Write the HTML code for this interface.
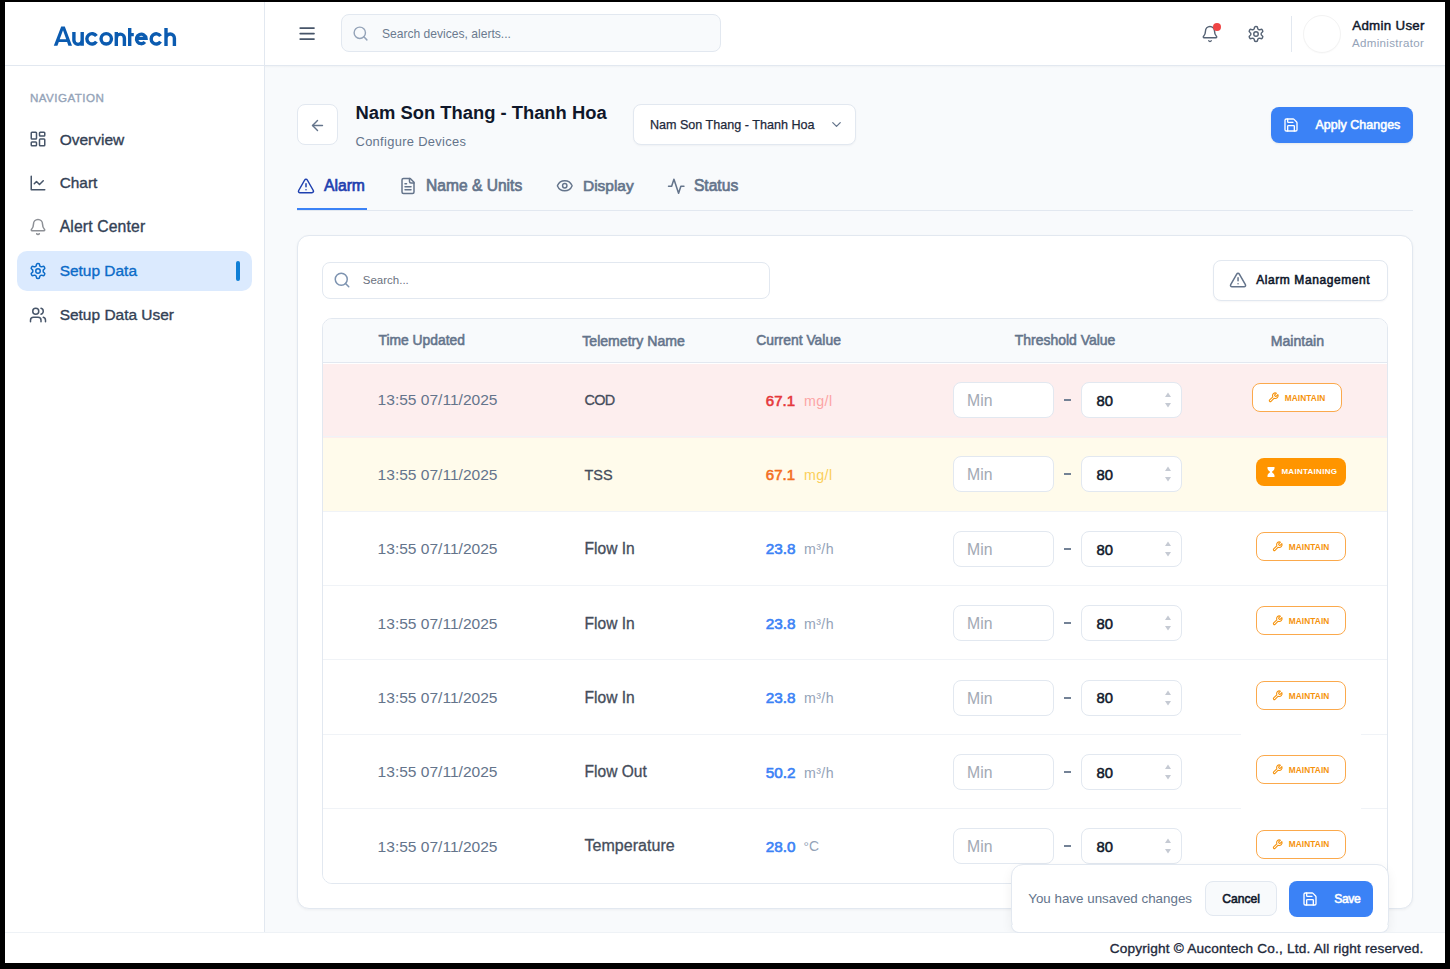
<!DOCTYPE html>
<html><head><meta charset="utf-8"><title>Aucontech - Setup Data</title>
<style>
*{box-sizing:border-box;margin:0;padding:0}
html,body{width:1450px;height:969px;overflow:hidden;background:#000;font-family:"Liberation Sans",sans-serif}
.b{position:absolute}
.t{position:absolute;white-space:nowrap;line-height:1}
svg{position:absolute;overflow:visible}
</style></head>
<body>
<div class="b" style="left:5px;top:2px;width:1440px;height:961px;background:#f8fafc"></div>
<div class="b" style="left:5px;top:2px;width:259px;height:930px;background:#fff"></div>
<div class="b" style="left:264px;top:2px;width:1px;height:930px;background:#e2e8f0"></div>
<div class="b" style="left:265px;top:2px;width:1180px;height:63px;background:#fff"></div>
<div class="b" style="left:5px;top:65px;width:1440px;height:1px;background:#e2e8f0"></div>
<div class="b" style="left:265px;top:66px;width:1180px;height:2px;background:linear-gradient(rgba(15,23,42,0.035),rgba(15,23,42,0))"></div>
<svg style="left:0;top:0" width="200" height="64" viewBox="0 0 200 64"><path fill="#0b5bb0" fill-rule="evenodd" d="M53.8 45.8 L61.2 26.5 L64.8 26.5 L72 45.8 L68.4 45.8 L67.1 42.1 L58.8 42.1 L57.4 45.8 Z M63 30.3 L66.2 39.3 L59.7 39.3 Z"/><g fill="none" stroke="#0b5bb0" stroke-width="3.4"><path d="M73.9 31.9 V40.2 A4.15 4.15 0 0 0 82.2 40.2 V31.9 M82.2 38 V45.8"/><path d="M96.41 36.02 A5.20 5.20 0 1 0 96.41 41.68"/><circle cx="106.25" cy="38.85" r="5.2"/><path d="M116.3 45.9 V32.1 M116.3 38.2 A4.05 4.05 0 0 1 124.4 38.2 V45.9"/><path d="M129.7 28.1 V45.9 M128 34.6 H133.8"/><path d="M136.4 38.4 H146 A4.75 4.75 0 1 0 144.9 42"/><path d="M160.53 36.12 A5.10 5.10 0 1 0 160.53 41.68"/><path d="M166 28.1 V45.9 M166 38.2 A4.2 4.2 0 0 1 174.4 38.2 V45.9"/></g></svg>
<svg style="left:0;top:0" width="1450" height="80"><path d="M300.2 28.1h13.8M300.2 33.6h13.8M300.2 39.1h13.8" stroke="#475569" stroke-width="1.7" stroke-linecap="round"/></svg>
<div class="b" style="left:341px;top:14px;width:380px;height:38px;background:#f8fafc;border:1px solid #e2e8f0;border-radius:8px"></div>
<svg style="left:352px;top:25px" width="17" height="17" viewBox="0 0 24 24" fill="none" stroke="#94a3b8" stroke-width="2" stroke-linecap="round" stroke-linejoin="round"><circle cx="11" cy="11" r="8"/><path d="m21 21-4.3-4.3"/></svg>
<div class="t" style="left:382.00px;top:28.26px;font-size:12.09px;color:#6b7a8f;">Search devices, alerts...</div>
<svg style="left:1201px;top:24.5px" width="18" height="18" viewBox="0 0 24 24" fill="none" stroke="#556274" stroke-width="1.9" stroke-linecap="round" stroke-linejoin="round"><path d="M10.268 21a2 2 0 0 0 3.464 0"/><path d="M3.262 15.326A1 1 0 0 0 4 17h16a1 1 0 0 0 .74-1.673C19.41 13.956 18 12.499 18 8A6 6 0 0 0 6 8c0 4.499-1.411 5.956-2.738 7.326"/></svg>
<div class="b" style="left:1213px;top:23px;width:8px;height:8px;background:#ef4444;border-radius:50%"></div>
<svg style="left:1247px;top:24.5px" width="18" height="18" viewBox="0 0 24 24" fill="none" stroke="#556274" stroke-width="1.9" stroke-linecap="round" stroke-linejoin="round"><path d="M12.22 2h-.44a2 2 0 0 0-2 2v.18a2 2 0 0 1-1 1.73l-.43.25a2 2 0 0 1-2 0l-.15-.08a2 2 0 0 0-2.73.73l-.22.38a2 2 0 0 0 .73 2.73l.15.1a2 2 0 0 1 1 1.72v.51a2 2 0 0 1-1 1.74l-.15.09a2 2 0 0 0-.73 2.73l.22.38a2 2 0 0 0 2.73.73l.15-.08a2 2 0 0 1 2 0l.43.25a2 2 0 0 1 1 1.73V20a2 2 0 0 0 2 2h.44a2 2 0 0 0 2-2v-.18a2 2 0 0 1 1-1.73l.43-.25a2 2 0 0 1 2 0l.15.08a2 2 0 0 0 2.73-.73l.22-.39a2 2 0 0 0-.73-2.73l-.15-.08a2 2 0 0 1-1-1.74v-.5a2 2 0 0 1 1-1.74l.15-.09a2 2 0 0 0 .73-2.73l-.22-.38a2 2 0 0 0-2.73-.73l-.15.08a2 2 0 0 1-2 0l-.43-.25a2 2 0 0 1-1-1.73V4a2 2 0 0 0-2-2z"/><circle cx="12" cy="12" r="3"/></svg>
<div class="b" style="left:1291px;top:16px;width:1px;height:36px;background:#e2e8f0"></div>
<div class="b" style="left:1303px;top:15px;width:38px;height:38px;background:#fff;border:1px solid #f3f3f3;border-radius:50%;box-shadow:0 1px 1px rgba(0,0,0,0.02)"></div>
<div class="t" style="left:1352.22px;top:19.40px;font-size:13.34px;color:#0f172a;-webkit-text-stroke:0.45px #0f172a;letter-spacing:0.294px;">Admin User</div>
<div class="t" style="left:1352.00px;top:38.21px;font-size:11.56px;color:#94a3b8;letter-spacing:0.323px;">Administrator</div>
<div class="t" style="left:29.88px;top:91.98px;font-size:11.60px;color:#94a3b8;-webkit-text-stroke:0.35px #94a3b8;letter-spacing:0.459px;">NAVIGATION</div>
<div class="b" style="left:17px;top:251px;width:235px;height:40px;background:#dbeafe;border-radius:10px"></div>
<div class="b" style="left:236px;top:261px;width:4px;height:20px;background:#0f7fd6;border-radius:2px"></div>
<svg style="left:29.2px;top:130.2px" width="18" height="18" viewBox="0 0 24 24" fill="none" stroke="#475569" stroke-width="2" stroke-linecap="round" stroke-linejoin="round"><rect x="3" y="3" width="7" height="9" rx="1"/><rect x="14" y="3" width="7" height="5" rx="1"/><rect x="14" y="12" width="7" height="9" rx="1"/><rect x="3" y="16" width="7" height="5" rx="1"/></svg>
<div class="t" style="left:59.67px;top:131.77px;font-size:15.50px;color:#334155;-webkit-text-stroke:0.35px #334155;">Overview</div>
<svg style="left:29.2px;top:173.79999999999998px" width="18" height="18" viewBox="0 0 24 24" fill="none" stroke="#475569" stroke-width="2" stroke-linecap="round" stroke-linejoin="round"><path d="M3 3v18h18"/><path d="m19 9-5 5-4-4-3 3"/></svg>
<div class="t" style="left:59.67px;top:175.45px;font-size:15.41px;color:#334155;-webkit-text-stroke:0.35px #334155;">Chart</div>
<svg style="left:29.2px;top:217.79999999999998px" width="18" height="18" viewBox="0 0 24 24" fill="none" stroke="#8d9096" stroke-width="2" stroke-linecap="round" stroke-linejoin="round"><path d="M10.268 21a2 2 0 0 0 3.464 0"/><path d="M3.262 15.326A1 1 0 0 0 4 17h16a1 1 0 0 0 .74-1.673C19.41 13.956 18 12.499 18 8A6 6 0 0 0 6 8c0 4.499-1.411 5.956-2.738 7.326"/></svg>
<div class="t" style="left:59.67px;top:219.19px;font-size:15.72px;color:#334155;-webkit-text-stroke:0.35px #334155;letter-spacing:0.146px;">Alert Center</div>
<svg style="left:29.2px;top:262.29999999999995px" width="18" height="18" viewBox="0 0 24 24" fill="none" stroke="#0b6bc8" stroke-width="2" stroke-linecap="round" stroke-linejoin="round"><path d="M12.22 2h-.44a2 2 0 0 0-2 2v.18a2 2 0 0 1-1 1.73l-.43.25a2 2 0 0 1-2 0l-.15-.08a2 2 0 0 0-2.73.73l-.22.38a2 2 0 0 0 .73 2.73l.15.1a2 2 0 0 1 1 1.72v.51a2 2 0 0 1-1 1.74l-.15.09a2 2 0 0 0-.73 2.73l.22.38a2 2 0 0 0 2.73.73l.15-.08a2 2 0 0 1 2 0l.43.25a2 2 0 0 1 1 1.73V20a2 2 0 0 0 2 2h.44a2 2 0 0 0 2-2v-.18a2 2 0 0 1 1-1.73l.43-.25a2 2 0 0 1 2 0l.15.08a2 2 0 0 0 2.73-.73l.22-.39a2 2 0 0 0-.73-2.73l-.15-.08a2 2 0 0 1-1-1.74v-.5a2 2 0 0 1 1-1.74l.15-.09a2 2 0 0 0 .73-2.73l-.22-.38a2 2 0 0 0-2.73-.73l-.15.08a2 2 0 0 1-2 0l-.43-.25a2 2 0 0 1-1-1.73V4a2 2 0 0 0-2-2z"/><circle cx="12" cy="12" r="3"/></svg>
<div class="t" style="left:59.67px;top:263.01px;font-size:15.46px;color:#0b6bc8;-webkit-text-stroke:0.35px #0b6bc8;">Setup Data</div>
<svg style="left:29.2px;top:306.29999999999995px" width="18" height="18" viewBox="0 0 24 24" fill="none" stroke="#475569" stroke-width="2" stroke-linecap="round" stroke-linejoin="round"><path d="M16 21v-2a4 4 0 0 0-4-4H6a4 4 0 0 0-4 4v2"/><circle cx="9" cy="7" r="4"/><path d="M22 21v-2a4 4 0 0 0-3-3.87"/><path d="M16 3.13a4 4 0 0 1 0 7.75"/></svg>
<div class="t" style="left:59.67px;top:306.99px;font-size:15.48px;color:#334155;-webkit-text-stroke:0.35px #334155;">Setup Data User</div>
<div class="b" style="left:297px;top:104px;width:41px;height:41px;background:#fff;border:1px solid #e2e8f0;border-radius:8px"></div>
<svg style="left:309px;top:117px" width="17" height="17" viewBox="0 0 24 24" fill="none" stroke="#64748b" stroke-width="2" stroke-linecap="round" stroke-linejoin="round"><path d="m12 19-7-7 7-7"/><path d="M19 12H5"/></svg>
<div class="t" style="left:355.50px;top:104.43px;font-size:18.39px;color:#0f172a;font-weight:700;">Nam Son Thang - Thanh Hoa</div>
<div class="t" style="left:355.50px;top:136.38px;font-size:12.90px;color:#64748b;letter-spacing:0.320px;">Configure Devices</div>
<div class="b" style="left:633px;top:104px;width:223px;height:41px;background:#fff;border:1px solid #e2e8f0;border-radius:8px;box-shadow:0 1px 2px rgba(15,23,42,0.04)"></div>
<div class="t" style="left:649.92px;top:118.65px;font-size:12.58px;color:#1e293b;-webkit-text-stroke:0.25px #1e293b;">Nam Son Thang - Thanh Hoa</div>
<svg style="left:829px;top:117px" width="15" height="15" viewBox="0 0 24 24" fill="none" stroke="#64748b" stroke-width="2" stroke-linecap="round" stroke-linejoin="round"><path d="m6 9 6 6 6-6"/></svg>
<div class="b" style="left:1271px;top:107px;width:142px;height:36px;background:#3b82f6;border-radius:8px;box-shadow:0 1px 2px rgba(15,23,42,0.08)"></div>
<svg style="left:1282.7px;top:116.6px" width="16" height="16" viewBox="0 0 24 24" fill="none" stroke="#fff" stroke-width="2" stroke-linecap="round" stroke-linejoin="round"><path d="M15.2 3a2 2 0 0 1 1.4.6l3.8 3.8a2 2 0 0 1 .6 1.4V19a2 2 0 0 1-2 2H5a2 2 0 0 1-2-2V5a2 2 0 0 1 2-2z"/><path d="M17 21v-7a1 1 0 0 0-1-1H8a1 1 0 0 0-1 1v7"/><path d="M7 3v4a1 1 0 0 0 1 1h7"/></svg>
<div class="t" style="left:1315.48px;top:118.76px;font-size:12.45px;color:#fff;-webkit-text-stroke:0.55px #fff;letter-spacing:0.041px;">Apply Changes</div>
<div class="b" style="left:297px;top:210px;width:1116px;height:1px;background:#e2e8f0"></div>
<div class="b" style="left:297px;top:208px;width:70px;height:2px;background:#3b82f6"></div>
<svg style="left:297px;top:177.1px" width="18" height="18" viewBox="0 0 24 24" fill="none" stroke="#1e40af" stroke-width="2" stroke-linecap="round" stroke-linejoin="round"><path d="m21.73 18-8-14a2 2 0 0 0-3.48 0l-8 14A2 2 0 0 0 4 21h16a2 2 0 0 0 1.73-3"/><path d="M12 9v4"/><path d="M12 17h.01"/></svg>
<div class="t" style="left:323.93px;top:178.09px;font-size:15.72px;color:#1e40af;-webkit-text-stroke:0.65px #1e40af;">Alarm</div>
<svg style="left:398.8px;top:177.2px" width="18" height="18" viewBox="0 0 24 24" fill="none" stroke="#64748b" stroke-width="2" stroke-linecap="round" stroke-linejoin="round"><path d="M15 2H6a2 2 0 0 0-2 2v16a2 2 0 0 0 2 2h12a2 2 0 0 0 2-2V7Z"/><path d="M14 2v4a2 2 0 0 0 2 2h4"/><path d="M10 9H8"/><path d="M16 13H8"/><path d="M16 17H8"/></svg>
<div class="t" style="left:426.12px;top:178.20px;font-size:15.59px;color:#64748b;-webkit-text-stroke:0.65px #64748b;">Name &amp; Units</div>
<svg style="left:556.2px;top:177px" width="17.5" height="17.5" viewBox="0 0 24 24" fill="none" stroke="#64748b" stroke-width="2" stroke-linecap="round" stroke-linejoin="round"><path d="M2.062 12.348a1 1 0 0 1 0-.696 10.75 10.75 0 0 1 19.876 0 1 1 0 0 1 0 .696 10.75 10.75 0 0 1-19.876 0"/><circle cx="12" cy="12" r="3"/></svg>
<div class="t" style="left:583.03px;top:178.32px;font-size:15.45px;color:#64748b;-webkit-text-stroke:0.65px #64748b;">Display</div>
<svg style="left:666.9px;top:177px" width="18.5" height="18.5" viewBox="0 0 24 24" fill="none" stroke="#64748b" stroke-width="2" stroke-linecap="round" stroke-linejoin="round"><path d="M22 12h-4l-3 9L9 3l-3 9H2"/></svg>
<div class="t" style="left:693.93px;top:178.15px;font-size:15.64px;color:#64748b;-webkit-text-stroke:0.65px #64748b;">Status</div>
<div class="b" style="left:297px;top:235px;width:1116px;height:674px;background:#fff;border:1px solid #e2e8f0;border-radius:12px;box-shadow:0 1px 3px rgba(15,23,42,0.05)"></div>
<div class="b" style="left:322px;top:262px;width:448px;height:37px;background:#fff;border:1px solid #e2e8f0;border-radius:8px"></div>
<svg style="left:333px;top:271px" width="18" height="18" viewBox="0 0 24 24" fill="none" stroke="#7d93b0" stroke-width="2" stroke-linecap="round" stroke-linejoin="round"><circle cx="11" cy="11" r="8"/><path d="m21 21-4.3-4.3"/></svg>
<div class="t" style="left:362.80px;top:274.97px;font-size:11.49px;color:#6b7280;">Search...</div>
<div class="b" style="left:1213px;top:260px;width:175px;height:41px;background:#fff;border:1px solid #e2e8f0;border-radius:8px;box-shadow:0 1px 2px rgba(15,23,42,0.04)"></div>
<svg style="left:1229.2px;top:271.3px" width="18.1" height="18.1" viewBox="0 0 24 24" fill="none" stroke="#64748b" stroke-width="2" stroke-linecap="round" stroke-linejoin="round"><path d="m21.73 18-8-14a2 2 0 0 0-3.48 0l-8 14A2 2 0 0 0 4 21h16a2 2 0 0 0 1.73-3"/><path d="M12 9v4"/><path d="M12 17h.01"/></svg>
<div class="t" style="left:1256.18px;top:274.43px;font-size:12.01px;color:#0f172a;-webkit-text-stroke:0.55px #0f172a;letter-spacing:0.577px;">Alarm Management</div>
<div class="b" style="left:322px;top:318px;width:1066px;height:566px;border:1px solid #e2e8f0;border-radius:10px;overflow:hidden;background:#fff">
<div class="b" style="left:0;top:0;width:1064px;height:44px;background:#f8fafc;border-bottom:1px solid #e2e8f0"></div>
<div class="b" style="left:0;top:44.70px;width:1064px;height:74.40px;background:#fdeeee"></div>
<div class="b" style="left:0;top:119.10px;width:1064px;height:74.40px;background:#fffbeb"></div>
<div class="b" style="left:0;top:193.50px;width:1064px;height:74.40px;background:#fff"></div>
<div class="b" style="left:0;top:267.90px;width:1064px;height:74.40px;background:#fff"></div>
<div class="b" style="left:0;top:342.30px;width:1064px;height:74.40px;background:#fff"></div>
<div class="b" style="left:0;top:416.70px;width:1064px;height:74.40px;background:#fff"></div>
<div class="b" style="left:0;top:491.10px;width:1064px;height:74.40px;background:#fff"></div>
<div class="b" style="left:0;top:117.20px;width:1064px;height:1px;background:#f0f3f7"></div>
<div class="b" style="left:0;top:191.60px;width:1064px;height:1px;background:#f0f3f7"></div>
<div class="b" style="left:0;top:266.00px;width:1064px;height:1px;background:#f0f3f7"></div>
<div class="b" style="left:0;top:340.40px;width:1064px;height:1px;background:#f0f3f7"></div>
<div class="b" style="left:0;top:414.80px;width:1064px;height:1px;background:#f0f3f7"></div>
<div class="b" style="left:0;top:489.20px;width:1064px;height:1px;background:#f0f3f7"></div>
</div>
<div class="b" style="left:1241px;top:732px;width:120px;height:4px;background:#fff"></div>
<div class="b" style="left:1241px;top:807px;width:120px;height:4px;background:#fff"></div>
<div class="t" style="left:378.47px;top:333.78px;font-size:13.85px;color:#64748b;-webkit-text-stroke:0.55px #64748b;">Time Updated</div>
<div class="t" style="left:582.27px;top:333.56px;font-size:14.10px;color:#64748b;-webkit-text-stroke:0.55px #64748b;">Telemetry Name</div>
<div class="t" style="left:756.27px;top:333.74px;font-size:13.89px;color:#64748b;-webkit-text-stroke:0.55px #64748b;">Current Value</div>
<div class="t" style="left:1014.77px;top:333.68px;font-size:13.96px;color:#64748b;-webkit-text-stroke:0.55px #64748b;">Threshold Value</div>
<div class="t" style="left:1270.68px;top:333.55px;font-size:14.11px;color:#64748b;-webkit-text-stroke:0.55px #64748b;">Maintain</div>
<div class="t" style="left:377.60px;top:392.42px;font-size:15.56px;color:#64748b;">13:55 07/11/2025</div>
<div class="t" style="left:584.55px;top:393.37px;font-size:14.44px;color:#454d5b;-webkit-text-stroke:0.30px #454d5b;letter-spacing:-0.695px;">COD</div>
<div class="t" style="left:765.80px;top:392.90px;font-size:15.01px;color:#e5383b;-webkit-text-stroke:0.60px #e5383b;">67.1</div>
<div class="t" style="left:803.90px;top:393.57px;font-size:14.21px;color:#fca5a5;letter-spacing:0.453px;">mg/l</div>
<div class="b" style="left:953px;top:382.0px;width:101px;height:36px;background:#fff;border:1px solid #e2e8f0;border-radius:8px"></div>
<div class="t" style="left:967.00px;top:393.05px;font-size:15.77px;color:#a3a9b4;">Min</div>
<div class="b" style="left:1064px;top:399px;width:7px;height:2px;background:#64748b;opacity:0.9"></div>
<div class="b" style="left:1081px;top:382.0px;width:101px;height:36px;background:#fff;border:1px solid #e2e8f0;border-radius:8px"></div>
<div class="t" style="left:1096.45px;top:393.83px;font-size:14.84px;color:#0f172a;-webkit-text-stroke:0.50px #0f172a;">80</div>
<svg style="left:1164px;top:392.0px" width="8" height="16" viewBox="0 0 8 16"><path d="M4 0.5 L7 5 L1 5 Z M4 15.5 L7 11 L1 11 Z" fill="#c5cad3"/></svg>
<div class="b" style="left:1252px;top:383.09999999999997px;width:90px;height:29px;background:#fff;border:1px solid #fba94c;border-radius:8px"></div>
<svg style="left:1267.6px;top:392.09999999999997px" width="11" height="11" viewBox="0 0 24 24" fill="none" stroke="#f5920b" stroke-width="2.3" stroke-linecap="round" stroke-linejoin="round"><path d="M14.7 6.3a1 1 0 0 0 0 1.4l1.6 1.6a1 1 0 0 0 1.4 0l3.77-3.77a6 6 0 0 1-7.94 7.94l-6.91 6.91a2.12 2.12 0 0 1-3-3l6.91-6.91a6 6 0 0 1 7.94-7.94l-3.76 3.76z"/></svg>
<div class="t" style="left:1284.70px;top:394.07px;font-size:8.30px;color:#f5920b;font-weight:700;letter-spacing:0.105px;">MAINTAIN</div>
<div class="t" style="left:377.60px;top:466.82px;font-size:15.56px;color:#64748b;">13:55 07/11/2025</div>
<div class="t" style="left:584.55px;top:467.77px;font-size:14.45px;color:#454d5b;-webkit-text-stroke:0.30px #454d5b;">TSS</div>
<div class="t" style="left:765.80px;top:467.30px;font-size:15.01px;color:#f36f1f;-webkit-text-stroke:0.60px #f36f1f;">67.1</div>
<div class="t" style="left:803.90px;top:467.97px;font-size:14.21px;color:#fbcf5a;letter-spacing:0.453px;">mg/l</div>
<div class="b" style="left:953px;top:456.40000000000003px;width:101px;height:36px;background:#fff;border:1px solid #e2e8f0;border-radius:8px"></div>
<div class="t" style="left:967.00px;top:467.45px;font-size:15.77px;color:#a3a9b4;">Min</div>
<div class="b" style="left:1064px;top:473px;width:7px;height:2px;background:#64748b;opacity:0.9"></div>
<div class="b" style="left:1081px;top:456.40000000000003px;width:101px;height:36px;background:#fff;border:1px solid #e2e8f0;border-radius:8px"></div>
<div class="t" style="left:1096.45px;top:468.23px;font-size:14.84px;color:#0f172a;-webkit-text-stroke:0.50px #0f172a;">80</div>
<svg style="left:1164px;top:466.4px" width="8" height="16" viewBox="0 0 8 16"><path d="M4 0.5 L7 5 L1 5 Z M4 15.5 L7 11 L1 11 Z" fill="#c5cad3"/></svg>
<div class="b" style="left:1256px;top:457.70000000000005px;width:90px;height:28px;background:#ff9500;border-radius:8px"></div>
<svg style="left:1266.5px;top:467.2px" width="8" height="10" viewBox="0 0 8 10"><path d="M0.5 0 H7.5 V1.5 C7.5 3 5.5 4 4.8 5 C5.5 6 7.5 7 7.5 8.5 V10 H0.5 V8.5 C0.5 7 2.5 6 3.2 5 C2.5 4 0.5 3 0.5 1.5 Z" fill="#fff"/></svg>
<div class="t" style="left:1281.40px;top:468.22px;font-size:8.01px;color:#fff;font-weight:700;letter-spacing:0.283px;">MAINTAINING</div>
<div class="t" style="left:377.60px;top:541.22px;font-size:15.56px;color:#64748b;">13:55 07/11/2025</div>
<div class="t" style="left:584.55px;top:541.21px;font-size:15.58px;color:#454d5b;-webkit-text-stroke:0.30px #454d5b;">Flow In</div>
<div class="t" style="left:765.80px;top:541.43px;font-size:15.31px;color:#3b82f6;-webkit-text-stroke:0.60px #3b82f6;">23.8</div>
<div class="t" style="left:803.90px;top:542.37px;font-size:14.21px;color:#94a3b8;letter-spacing:0.460px;">m³/h</div>
<div class="b" style="left:953px;top:530.8px;width:101px;height:36px;background:#fff;border:1px solid #e2e8f0;border-radius:8px"></div>
<div class="t" style="left:967.00px;top:541.85px;font-size:15.77px;color:#a3a9b4;">Min</div>
<div class="b" style="left:1064px;top:548px;width:7px;height:2px;background:#64748b;opacity:0.9"></div>
<div class="b" style="left:1081px;top:530.8px;width:101px;height:36px;background:#fff;border:1px solid #e2e8f0;border-radius:8px"></div>
<div class="t" style="left:1096.45px;top:542.63px;font-size:14.84px;color:#0f172a;-webkit-text-stroke:0.50px #0f172a;">80</div>
<svg style="left:1164px;top:540.8px" width="8" height="16" viewBox="0 0 8 16"><path d="M4 0.5 L7 5 L1 5 Z M4 15.5 L7 11 L1 11 Z" fill="#c5cad3"/></svg>
<div class="b" style="left:1256px;top:531.9px;width:90px;height:29px;background:#fff;border:1px solid #fba94c;border-radius:8px"></div>
<svg style="left:1271.6px;top:540.9px" width="11" height="11" viewBox="0 0 24 24" fill="none" stroke="#f5920b" stroke-width="2.3" stroke-linecap="round" stroke-linejoin="round"><path d="M14.7 6.3a1 1 0 0 0 0 1.4l1.6 1.6a1 1 0 0 0 1.4 0l3.77-3.77a6 6 0 0 1-7.94 7.94l-6.91 6.91a2.12 2.12 0 0 1-3-3l6.91-6.91a6 6 0 0 1 7.94-7.94l-3.76 3.76z"/></svg>
<div class="t" style="left:1288.70px;top:542.87px;font-size:8.30px;color:#f5920b;font-weight:700;letter-spacing:0.105px;">MAINTAIN</div>
<div class="t" style="left:377.60px;top:615.62px;font-size:15.56px;color:#64748b;">13:55 07/11/2025</div>
<div class="t" style="left:584.55px;top:615.61px;font-size:15.58px;color:#454d5b;-webkit-text-stroke:0.30px #454d5b;">Flow In</div>
<div class="t" style="left:765.80px;top:615.83px;font-size:15.31px;color:#3b82f6;-webkit-text-stroke:0.60px #3b82f6;">23.8</div>
<div class="t" style="left:803.90px;top:616.77px;font-size:14.21px;color:#94a3b8;letter-spacing:0.460px;">m³/h</div>
<div class="b" style="left:953px;top:605.1999999999999px;width:101px;height:36px;background:#fff;border:1px solid #e2e8f0;border-radius:8px"></div>
<div class="t" style="left:967.00px;top:616.25px;font-size:15.77px;color:#a3a9b4;">Min</div>
<div class="b" style="left:1064px;top:622px;width:7px;height:2px;background:#64748b;opacity:0.9"></div>
<div class="b" style="left:1081px;top:605.1999999999999px;width:101px;height:36px;background:#fff;border:1px solid #e2e8f0;border-radius:8px"></div>
<div class="t" style="left:1096.45px;top:617.03px;font-size:14.84px;color:#0f172a;-webkit-text-stroke:0.50px #0f172a;">80</div>
<svg style="left:1164px;top:615.2px" width="8" height="16" viewBox="0 0 8 16"><path d="M4 0.5 L7 5 L1 5 Z M4 15.5 L7 11 L1 11 Z" fill="#c5cad3"/></svg>
<div class="b" style="left:1256px;top:606.3px;width:90px;height:29px;background:#fff;border:1px solid #fba94c;border-radius:8px"></div>
<svg style="left:1271.6px;top:615.3px" width="11" height="11" viewBox="0 0 24 24" fill="none" stroke="#f5920b" stroke-width="2.3" stroke-linecap="round" stroke-linejoin="round"><path d="M14.7 6.3a1 1 0 0 0 0 1.4l1.6 1.6a1 1 0 0 0 1.4 0l3.77-3.77a6 6 0 0 1-7.94 7.94l-6.91 6.91a2.12 2.12 0 0 1-3-3l6.91-6.91a6 6 0 0 1 7.94-7.94l-3.76 3.76z"/></svg>
<div class="t" style="left:1288.70px;top:617.27px;font-size:8.30px;color:#f5920b;font-weight:700;letter-spacing:0.105px;">MAINTAIN</div>
<div class="t" style="left:377.60px;top:690.02px;font-size:15.56px;color:#64748b;">13:55 07/11/2025</div>
<div class="t" style="left:584.55px;top:690.01px;font-size:15.58px;color:#454d5b;-webkit-text-stroke:0.30px #454d5b;">Flow In</div>
<div class="t" style="left:765.80px;top:690.23px;font-size:15.31px;color:#3b82f6;-webkit-text-stroke:0.60px #3b82f6;">23.8</div>
<div class="t" style="left:803.90px;top:691.17px;font-size:14.21px;color:#94a3b8;letter-spacing:0.460px;">m³/h</div>
<div class="b" style="left:953px;top:679.5999999999999px;width:101px;height:36px;background:#fff;border:1px solid #e2e8f0;border-radius:8px"></div>
<div class="t" style="left:967.00px;top:690.65px;font-size:15.77px;color:#a3a9b4;">Min</div>
<div class="b" style="left:1064px;top:697px;width:7px;height:2px;background:#64748b;opacity:0.9"></div>
<div class="b" style="left:1081px;top:679.5999999999999px;width:101px;height:36px;background:#fff;border:1px solid #e2e8f0;border-radius:8px"></div>
<div class="t" style="left:1096.45px;top:691.43px;font-size:14.84px;color:#0f172a;-webkit-text-stroke:0.50px #0f172a;">80</div>
<svg style="left:1164px;top:689.6px" width="8" height="16" viewBox="0 0 8 16"><path d="M4 0.5 L7 5 L1 5 Z M4 15.5 L7 11 L1 11 Z" fill="#c5cad3"/></svg>
<div class="b" style="left:1256px;top:680.6999999999999px;width:90px;height:29px;background:#fff;border:1px solid #fba94c;border-radius:8px"></div>
<svg style="left:1271.6px;top:689.6999999999999px" width="11" height="11" viewBox="0 0 24 24" fill="none" stroke="#f5920b" stroke-width="2.3" stroke-linecap="round" stroke-linejoin="round"><path d="M14.7 6.3a1 1 0 0 0 0 1.4l1.6 1.6a1 1 0 0 0 1.4 0l3.77-3.77a6 6 0 0 1-7.94 7.94l-6.91 6.91a2.12 2.12 0 0 1-3-3l6.91-6.91a6 6 0 0 1 7.94-7.94l-3.76 3.76z"/></svg>
<div class="t" style="left:1288.70px;top:691.67px;font-size:8.30px;color:#f5920b;font-weight:700;letter-spacing:0.105px;">MAINTAIN</div>
<div class="t" style="left:377.60px;top:764.42px;font-size:15.56px;color:#64748b;">13:55 07/11/2025</div>
<div class="t" style="left:584.55px;top:764.42px;font-size:15.57px;color:#454d5b;-webkit-text-stroke:0.30px #454d5b;">Flow Out</div>
<div class="t" style="left:765.80px;top:764.63px;font-size:15.31px;color:#3b82f6;-webkit-text-stroke:0.60px #3b82f6;">50.2</div>
<div class="t" style="left:803.90px;top:765.57px;font-size:14.21px;color:#94a3b8;letter-spacing:0.460px;">m³/h</div>
<div class="b" style="left:953px;top:754.0px;width:101px;height:36px;background:#fff;border:1px solid #e2e8f0;border-radius:8px"></div>
<div class="t" style="left:967.00px;top:765.05px;font-size:15.77px;color:#a3a9b4;">Min</div>
<div class="b" style="left:1064px;top:771px;width:7px;height:2px;background:#64748b;opacity:0.9"></div>
<div class="b" style="left:1081px;top:754.0px;width:101px;height:36px;background:#fff;border:1px solid #e2e8f0;border-radius:8px"></div>
<div class="t" style="left:1096.45px;top:765.83px;font-size:14.84px;color:#0f172a;-webkit-text-stroke:0.50px #0f172a;">80</div>
<svg style="left:1164px;top:764.0px" width="8" height="16" viewBox="0 0 8 16"><path d="M4 0.5 L7 5 L1 5 Z M4 15.5 L7 11 L1 11 Z" fill="#c5cad3"/></svg>
<div class="b" style="left:1256px;top:755.1px;width:90px;height:29px;background:#fff;border:1px solid #fba94c;border-radius:8px"></div>
<svg style="left:1271.6px;top:764.1px" width="11" height="11" viewBox="0 0 24 24" fill="none" stroke="#f5920b" stroke-width="2.3" stroke-linecap="round" stroke-linejoin="round"><path d="M14.7 6.3a1 1 0 0 0 0 1.4l1.6 1.6a1 1 0 0 0 1.4 0l3.77-3.77a6 6 0 0 1-7.94 7.94l-6.91 6.91a2.12 2.12 0 0 1-3-3l6.91-6.91a6 6 0 0 1 7.94-7.94l-3.76 3.76z"/></svg>
<div class="t" style="left:1288.70px;top:766.07px;font-size:8.30px;color:#f5920b;font-weight:700;letter-spacing:0.105px;">MAINTAIN</div>
<div class="t" style="left:377.60px;top:838.82px;font-size:15.56px;color:#64748b;">13:55 07/11/2025</div>
<div class="t" style="left:584.55px;top:838.44px;font-size:16.01px;color:#454d5b;-webkit-text-stroke:0.30px #454d5b;letter-spacing:0.031px;">Temperature</div>
<div class="t" style="left:765.80px;top:839.03px;font-size:15.31px;color:#3b82f6;-webkit-text-stroke:0.60px #3b82f6;">28.0</div>
<div class="t" style="left:803.60px;top:840.37px;font-size:13.50px;color:#94a3b8;">°</div>
<div class="t" style="left:808.90px;top:840.23px;font-size:13.90px;color:#94a3b8;">C</div>
<div class="b" style="left:953px;top:828.4px;width:101px;height:36px;background:#fff;border:1px solid #e2e8f0;border-radius:8px"></div>
<div class="t" style="left:967.00px;top:839.45px;font-size:15.77px;color:#a3a9b4;">Min</div>
<div class="b" style="left:1064px;top:845px;width:7px;height:2px;background:#64748b;opacity:0.9"></div>
<div class="b" style="left:1081px;top:828.4px;width:101px;height:36px;background:#fff;border:1px solid #e2e8f0;border-radius:8px"></div>
<div class="t" style="left:1096.45px;top:840.23px;font-size:14.84px;color:#0f172a;-webkit-text-stroke:0.50px #0f172a;">80</div>
<svg style="left:1164px;top:838.4px" width="8" height="16" viewBox="0 0 8 16"><path d="M4 0.5 L7 5 L1 5 Z M4 15.5 L7 11 L1 11 Z" fill="#c5cad3"/></svg>
<div class="b" style="left:1256px;top:829.5px;width:90px;height:29px;background:#fff;border:1px solid #fba94c;border-radius:8px"></div>
<svg style="left:1271.6px;top:838.5px" width="11" height="11" viewBox="0 0 24 24" fill="none" stroke="#f5920b" stroke-width="2.3" stroke-linecap="round" stroke-linejoin="round"><path d="M14.7 6.3a1 1 0 0 0 0 1.4l1.6 1.6a1 1 0 0 0 1.4 0l3.77-3.77a6 6 0 0 1-7.94 7.94l-6.91 6.91a2.12 2.12 0 0 1-3-3l6.91-6.91a6 6 0 0 1 7.94-7.94l-3.76 3.76z"/></svg>
<div class="t" style="left:1288.70px;top:840.47px;font-size:8.30px;color:#f5920b;font-weight:700;letter-spacing:0.105px;">MAINTAIN</div>
<div class="b" style="left:1011px;top:864px;width:378px;height:69px;background:#fff;border:1px solid #e2e8f0;border-radius:12px;box-shadow:0 4px 12px rgba(15,23,42,0.06)"></div>
<div class="t" style="left:1028.20px;top:891.67px;font-size:13.39px;color:#64748b;">You have unsaved changes</div>
<div class="b" style="left:1205px;top:881px;width:72px;height:35px;background:#f8fafc;border:1px solid #e2e8f0;border-radius:8px"></div>
<div class="t" style="left:1222.18px;top:893.15px;font-size:12.11px;color:#0f172a;-webkit-text-stroke:0.55px #0f172a;">Cancel</div>
<div class="b" style="left:1289px;top:881px;width:84px;height:36px;background:#3b82f6;border-radius:8px"></div>
<svg style="left:1301.6px;top:890.7px" width="16" height="16" viewBox="0 0 24 24" fill="none" stroke="#fff" stroke-width="2" stroke-linecap="round" stroke-linejoin="round"><path d="M15.2 3a2 2 0 0 1 1.4.6l3.8 3.8a2 2 0 0 1 .6 1.4V19a2 2 0 0 1-2 2H5a2 2 0 0 1-2-2V5a2 2 0 0 1 2-2z"/><path d="M17 21v-7a1 1 0 0 0-1-1H8a1 1 0 0 0-1 1v7"/><path d="M7 3v4a1 1 0 0 0 1 1h7"/></svg>
<div class="t" style="left:1334.28px;top:893.15px;font-size:12.11px;color:#fff;-webkit-text-stroke:0.55px #fff;letter-spacing:-0.381px;">Save</div>
<div class="b" style="left:5px;top:932px;width:1440px;height:31px;background:#fff"></div>
<div class="b" style="left:5px;top:932px;width:1440px;height:1px;background:#eef2f6"></div>
<div class="t" style="left:1109.67px;top:941.95px;font-size:13.64px;color:#1e293b;-webkit-text-stroke:0.35px #1e293b;letter-spacing:0.195px;">Copyright © Aucontech Co., Ltd. All right reserved.</div>
<div class="b" style="left:1011px;top:925px;width:378px;height:8px;background:#fff;border:1px solid #e2e8f0;border-top:none;border-radius:0 0 12px 12px"></div>
<div class="b" style="left:0px;top:0px;width:1450px;height:2px;background:#000"></div>
<div class="b" style="left:0px;top:0px;width:5px;height:969px;background:#000"></div>
<div class="b" style="left:1445px;top:0px;width:5px;height:969px;background:#000"></div>
<div class="b" style="left:0px;top:963px;width:1450px;height:6px;background:#000"></div>
</body></html>
